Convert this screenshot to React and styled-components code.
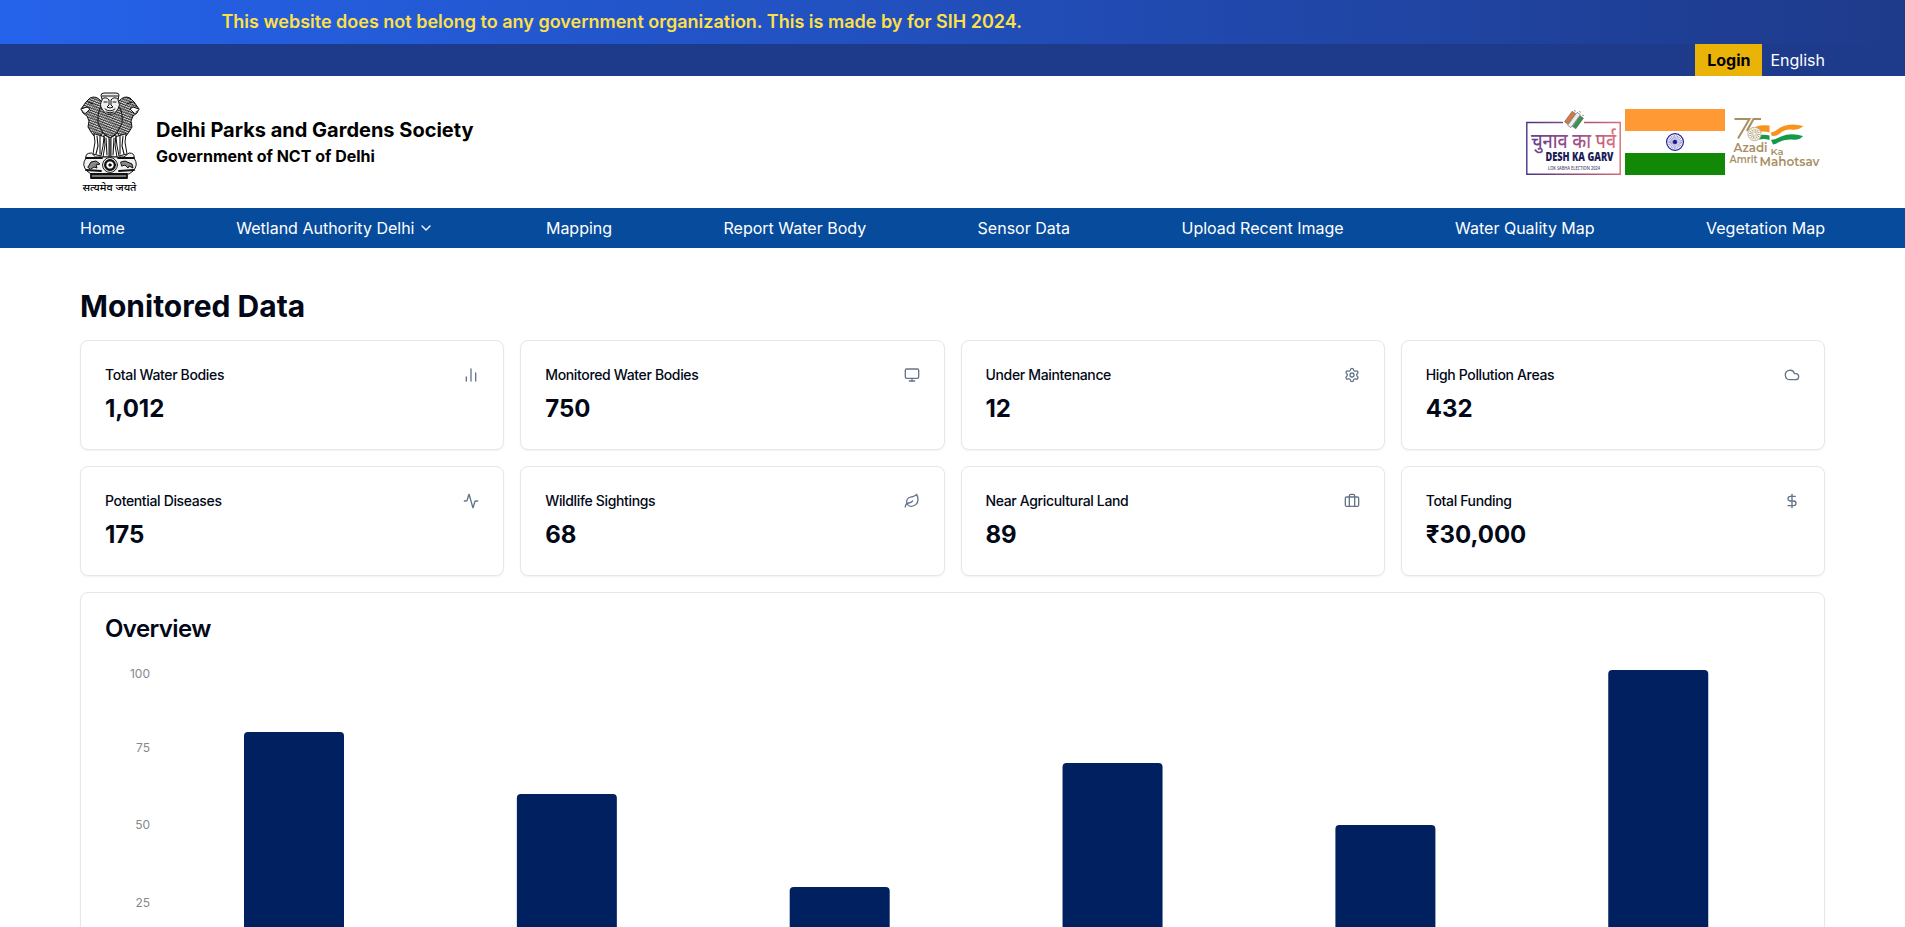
import React from "react";
import styled, { createGlobalStyle } from "styled-components";
import { Activity, Briefcase, ChartNoAxesColumn, ChevronDown, Cloud, DollarSign, Leaf, Monitor, Settings } from "lucide-react";

const Global = createGlobalStyle`
  *, *::before, *::after { box-sizing: border-box; }
  html { overflow: hidden; }
  body { margin: 0; height: 100vh; overflow: hidden; background: #fff; color: #020817; font-family: Inter, "Noto Sans", sans-serif; font-size: 16px; line-height: 24px; }
  h1, h2, h3, p { margin: 0; }
`;

const Banner = styled.div`
  height: 44px;
  padding: 8px 0 8px 221.4px;
  background: linear-gradient(to right, #2563eb, #1e3a8a);
  color: #fde047;
  font-size: 18px;
  font-weight: 600;
  line-height: 28px;
`;
const TopBar = styled.div`
  display: flex;
  justify-content: flex-end;
  height: 32px;
  padding-right: 80px;
  background: #1e3a8a;
  color: #fff;
  line-height: 32px;
`;
const Login = styled.a`
  padding: 0 12px;
  margin-right: 8px;
  background: #eab308;
  color: #000;
  font-weight: 700;
`;
const Header = styled.header`
  display: flex;
  align-items: center;
  justify-content: space-between;
  height: 132px;
  padding: 0 80px;
  color: #000;
`;
const Brand = styled.div`
  display: flex;
  align-items: center;
  gap: 16px;
`;
const Org = styled.h1`
  font-size: 20px;
  font-weight: 700;
  line-height: 28px;
`;
const Gov = styled.p`
  font-weight: 700;
`;
const Logos = styled.div`
  display: flex;
  align-items: center;
  gap: 4px;
  svg { display: block; overflow: visible; }
`;
const Nav = styled.nav`
  display: flex;
  justify-content: space-between;
  align-items: center;
  height: 40px;
  padding: 0 80px;
  background: #074b9c;
  color: #fff;
`;
const NavItem = styled.a`
  display: flex;
  align-items: center;
  gap: 4px;
`;
const Main = styled.main`
  padding: 40px 80px 0;
`;
const Heading = styled.h2`
  font-size: 30px;
  font-weight: 700;
  line-height: 36px;
  margin-bottom: 16px;
`;
const Grid = styled.div`
  display: grid;
  grid-template-columns: repeat(4, 1fr);
  gap: 16px;
  margin-bottom: 16px;
`;
const Card = styled.section`
  border: 1px solid #e2e8f0;
  border-radius: 8px;
  background: #fff;
  box-shadow: 0 1px 2px rgba(0, 0, 0, 0.05);
`;
const StatCard = styled(Card)`
  padding: 24px;
`;
const StatHead = styled.div`
  display: flex;
  align-items: center;
  justify-content: space-between;
  margin-bottom: 8px;
  color: #64748b;
`;
const StatTitle = styled.h3`
  color: #020817;
  font-size: 14px;
  font-weight: 500;
  line-height: 20px;
  letter-spacing: -0.35px;
`;
const StatValue = styled.div`
  font-size: 24px;
  font-weight: 700;
  line-height: 32px;
`;
const ChartTitle = styled.h3`
  padding: 24px;
  font-size: 24px;
  font-weight: 600;
  line-height: 24px;
  letter-spacing: -0.6px;
`;
const Chart = styled.svg`
  display: block;
  margin-left: 8px;
  font-size: 12px;
`;

const stats = [
  ["Total Water Bodies", "1,012", ChartNoAxesColumn],
  ["Monitored Water Bodies", "750", Monitor],
  ["Under Maintenance", "12", Settings],
  ["High Pollution Areas", "432", Cloud],
  ["Potential Diseases", "175", Activity],
  ["Wildlife Sightings", "68", Leaf],
  ["Near Agricultural Land", "89", Briefcase],
  ["Total Funding", "₹30,000", DollarSign],
];
const bars = [80, 60, 30, 70, 50, 100];
const ticks = [[100, 8.5], [75, 82.5], [50, 160], [25, 237.5]];

function Emblem() {
  return (
    <svg width="60" height="104" viewBox="0 0 60 104">
      <defs>
        <pattern id="mane" width="2.6" height="2.4" patternUnits="userSpaceOnUse" patternTransform="rotate(20)">
          <rect width="2.6" height="2.4" fill="#ececec" />
          <path d="M0 .3l1.3 1.300L2.600 .3" fill="none" stroke="#111" strokeWidth=".85" />
        </pattern>
      </defs>
      <g stroke="#111" strokeWidth="1" strokeLinejoin="round" strokeLinecap="round">
        <path d="M21 11Q16 5 10 8L6 12 1 19l2 4 4 3 2 5-1 6 3 5 3 4 6 2 5-10z" fill="url(#mane)" />
        <path d="M39 11Q44 5 50 8l4 4 5 7-2 4-4 3-2 5 1 6-3 5-3 4-6 2-5-10z" fill="url(#mane)" />
        <path d="M20 18Q17 25 18 33l5 10 7 5 7-5 5-10q1-9-2-15z" fill="url(#mane)" />
        <path d="M21 5q0-2 3-2h12q3 0 3 2l-1 5q3 5 0 9l-4 5h-8l-4-5q-3-4 0-9z" fill="#eee" />
        <path d="M22 6h16M22 9q4-3 7 1v5l-2 2q3 2 6 0l-2-2v-5q3-4 7-1M24 12h3m6 0h3M25 19q5 4 10 0M26 22q4 2 8 0" fill="none" />
        <path d="M1 19l6-2 3 2-4 4M59 19l-6-2-3 2 4 4M8 12l5 2m39-2l-5 2" fill="#fff" />
        <path d="M14 44l1 8-2 12 8 2 2-10 1-9zM46 44l-1 8 2 12-8 2-2-10-1-9zM24 45l1 10-2 12h6V48zM36 45l-1 10 2 12h-6V48z" fill="#fff" />
        <path d="M17 46l1 10-2 8M20 46v18M43 46l-1 10 2 8M40 46v18M26 48l1 17M34 48l-1 17M30 49v18" fill="none" strokeWidth="1.1" />
        <path d="M11 63q-6 0-5 5-5 7 1 13l4 3h38l4-3q6-6 1-13 1-5-5-5l-5 4H16z" fill="#f1f1f1" />
        <path d="M6 68h16M38 68h16M6 80l15 1M39 81l15-1" strokeWidth="1.8" fill="none" />
        <path d="M11 84v4h36v-4z" fill="#777" strokeWidth="1.8" />
        <path d="M8 77l3-5 5-1 4 3-4 1 1 3-3-1-3 2zm33-5l4-1 7 3 1 4-4-2-1 2-3-3-3 1z" fill="#888" />
        <circle cx="30" cy="75" r="7.4" fill="#fff" />
        <circle cx="30" cy="75" r="4.8" fill="none" strokeWidth="2.4" strokeDasharray=".6 1.2" />
        <circle cx="30" cy="75" r="1.2" />
      </g>
      <text x="29.5" y="101" textAnchor="middle" fontFamily="Noto Sans, sans-serif" fontSize="10" fontWeight="500" textLength="54" lengthAdjust="spacingAndGlyphs" fill="#000">सत्यमेव जयते</text>
    </svg>
  );
}

function ElectionLogo() {
  return (
    <svg width="95" height="66" viewBox="0 0 95 66">
      <defs>
        <linearGradient id="border" x1="0" x2="1"><stop stopColor="#4b3288" /><stop offset="1" stopColor="#d56c78" /></linearGradient>
        <linearGradient id="hindi" x1="0" x2="1"><stop stopColor="#67408f" /><stop offset=".6" stopColor="#a65286" /><stop offset="1" stopColor="#d9727c" /></linearGradient>
      </defs>
      <path d="M37 13.5H.8v51.7h93.4V13.5H58" fill="none" stroke="url(#border)" strokeWidth="1.4" />
      <g transform="translate(48 11) rotate(36)" stroke="#666" strokeWidth=".6">
        <rect x="-6.6" y="-6" width="4" height="13" fill="#d8783d" />
        <rect x="-2" y="-8" width="4" height="16" fill="#eee" />
        <rect x="2.6" y="-7" width="4" height="13" fill="#359451" />
        <path d="M-4.6 -8.5v1M0 -10.5v1M4.6 -9.5v1" stroke="#888" strokeWidth="1.8" />
      </g>
      <text x="5" y="39" fontFamily="Noto Sans, sans-serif" fontSize="21" fontWeight="500" textLength="85" lengthAdjust="spacingAndGlyphs" fill="url(#hindi)">चुनाव का पर्व</text>
      <text x="19.5" y="52" fontFamily="Open Sans, sans-serif" fontSize="12.5" fontWeight="800" textLength="68" lengthAdjust="spacingAndGlyphs" fill="#1c2058">DESH KA GARV</text>
      <text x="22" y="61" fontFamily="Open Sans, sans-serif" fontSize="4.7" fontWeight="600" textLength="52" lengthAdjust="spacingAndGlyphs" fill="#4e4771">LOK SABHA ELECTION 2024</text>
    </svg>
  );
}

function Flag() {
  return (
    <svg width="100" height="66" viewBox="0 0 100 66">
      <path fill="#ff9933" d="M0 0h100v22H0z" />
      <path fill="#fff" d="M0 22h100v22H0z" />
      <path fill="#128807" d="M0 44h100v22H0z" />
      <g stroke="#1b1b99" fill="none">
        <circle cx="50" cy="33" r="8.4" strokeWidth="1.2" />
        <circle cx="50" cy="33" r="4" strokeWidth="6" strokeDasharray=".45 .6" opacity=".6" />
        <circle cx="50" cy="33" r="1.8" fill="#1b1b99" />
      </g>
    </svg>
  );
}

function AzadiLogo() {
  return (
    <svg width="96" height="66" viewBox="0 0 96 66">
      <path d="M5.5 10h15L9 29.5M32 10h-7.5L18 21.5M24 11l-6 11" fill="none" stroke="#a79063" strokeWidth="2" />
      <path d="M27 17.500q6-2 13.500-1v7q-6-2-12 0z" fill="#f7941e" />
      <path d="M29 26.500q6-1.500 11.500 0V31q-5-1.500-10.500-.5z" fill="#149b4a" />
      <path d="M41.500 24q5-1.500 9-5 9-6 24-2-5 4.500-12 3.500-7-.5-11 3.500-4 3.500-8.500 3z" fill="#f7941e" />
      <path d="M42 31q5-.5 10-3.500 10-4 22-.5-3 4.500-11 3.500-8-.5-13 2.500-3 2-6 2.500z" fill="#149b4a" />
      <circle cx="25.5" cy="25" r="6.6" fill="#fff" stroke="#c1b08f" strokeWidth="1" />
      <circle cx="25.5" cy="25" r="3.2" fill="none" stroke="#b09b72" strokeWidth="4.5" strokeDasharray=".6 .8" />
      <g fill="#a79063" fontFamily="Montserrat, Lato, sans-serif" fontWeight="600">
        <text x="4.5" y="42.5" fontSize="12" textLength="34" lengthAdjust="spacingAndGlyphs">Azadi</text>
        <text x="41.5" y="45.5" fontSize="9.5" textLength="13" lengthAdjust="spacingAndGlyphs">Ka</text>
        <text x=".5" y="53.5" fontSize="10" textLength="28" lengthAdjust="spacingAndGlyphs">Amrit</text>
        <text x="30.5" y="57" fontSize="12" textLength="60" lengthAdjust="spacingAndGlyphs">Mahotsav</text>
      </g>
    </svg>
  );
}

export default function App() {
  return (
    <>
      <Global />
      <Banner>This website does not belong to any government organization. This is made by for SIH 2024.</Banner>
      <TopBar><Login>Login</Login><span>English</span></TopBar>
      <Header>
        <Brand>
          <Emblem />
          <div>
            <Org>Delhi Parks and Gardens Society</Org>
            <Gov>Government of NCT of Delhi</Gov>
          </div>
        </Brand>
        <Logos><ElectionLogo /><Flag /><AzadiLogo /></Logos>
      </Header>
      <Nav>
        <NavItem>Home</NavItem>
        <NavItem>Wetland Authority Delhi <ChevronDown size={16} /></NavItem>
        <NavItem>Mapping</NavItem>
        <NavItem>Report Water Body</NavItem>
        <NavItem>Sensor Data</NavItem>
        <NavItem>Upload Recent Image</NavItem>
        <NavItem>Water Quality Map</NavItem>
        <NavItem>Vegetation Map</NavItem>
      </Nav>
      <Main>
        <Heading>Monitored Data</Heading>
        <Grid>
          {stats.map(([title, value, Icon]) => (
            <StatCard key={title}>
              <StatHead><StatTitle>{title}</StatTitle><Icon size={16} /></StatHead>
              <StatValue>{value}</StatValue>
            </StatCard>
          ))}
        </Grid>
        <Card>
          <ChartTitle>Overview</ChartTitle>
          <Chart width="1711" height="350">
            {ticks.map(([label, y]) => (
              <text key={label} x="61" y={y} dy="0.355em" textAnchor="end" fill="#888888">{label}</text>
            ))}
            {bars.map((v, i) => {
              const x = 155 + i * 272.85;
              const top = 315 - v * 3.1;
              return <path key={i} fill="#002060" d={`M${x} 315V${top + 4}q0-4 4-4h92q4 0 4 4V315z`} />;
            })}
          </Chart>
        </Card>
      </Main>
    </>
  );
}
